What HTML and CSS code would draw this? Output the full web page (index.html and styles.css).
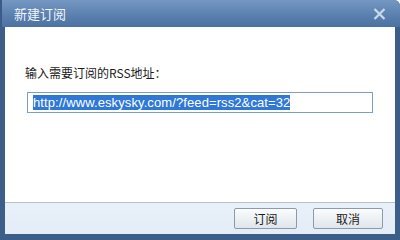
FILE: index.html
```html
<!DOCTYPE html>
<html lang="zh-CN">
<head>
  <meta charset="UTF-8" />
  <title>新建订阅</title>
  <link rel="stylesheet" href="styles.css">
</head>
<body>
  <div class="window">
    <div class="titlebar">
      <span class="title">新建订阅</span>
      <button class="close" title="关闭">
        <svg width="13" height="12" viewBox="0 0 13 12">
          <path d="M1.5 1 L11.5 11 M11.5 1 L1.5 11" stroke="#c9d9ec" stroke-width="2.2" fill="none" />
        </svg>
      </button>
    </div>

    <div class="content">
      <label class="field-label" for="rssUrl">输入需要订阅的RSS地址：</label>
      <div class="url-box">
        <span class="selected" id="rssUrl">http://www.eskysky.com/?feed=rss2&amp;cat=32</span>
      </div>
    </div>

    <div class="footer">
      <button class="btn btn-ok">订阅</button>
      <button class="btn btn-cancel">取消</button>
    </div>
  </div>
</body>
</html>
```

FILE: styles.css
```css
body {
  margin: 0;
  background: #ffffff;
  font-family: "Liberation Sans", "Noto Sans CJK SC", sans-serif;
}
.window {
  width: 400px;
  height: 240px;
  box-sizing: border-box;
  display: flex;
  flex-direction: column;
  background: #3c5e88;
  border-radius: 0 6px 0 0;
  padding-bottom: 6px;
  overflow: hidden;
}
.titlebar {
  height: 27px;
  flex: none;
  display: flex;
  align-items: center;
  justify-content: space-between;
  padding: 0 14px 0 14px;
  background: linear-gradient(#7598c2, #5a7fae 60%, #4c72a2);
  border-left: 2px solid #3a5c86;
  box-sizing: border-box;
}
.title {
  color: #f2f6fb;
  font-size: 13px;
  font-family: "Noto Sans CJK SC", sans-serif;
  margin-left: -2px;
}
.close {
  border: none;
  background: none;
  padding: 0;
  width: 13px;
  height: 12px;
  display: flex;
}
.content {
  flex: 1;
  margin: 0 5px;
  background: #ffffff;
  padding: 38px 0 0 20px;
  border-bottom: 1px solid #b9c2cc;
}
.field-label {
  display: block;
  font-size: 12px;
  color: #1b1b1b;
  font-family: "Noto Sans CJK SC", sans-serif;
  line-height: 16px;
}
.url-box {
  margin: 11px 0 0 2px;
  width: 346px;
  height: 21px;
  box-sizing: border-box;
  border: 1px solid #7f9dc4;
  padding: 2px 5px;
  display: flex;
  align-items: center;
}
.selected {
  background: #2f78d6;
  color: #ffffff;
  font-size: 13px;
  letter-spacing: 0.1px;
  line-height: 15px;
  white-space: nowrap;
}
.footer {
  height: 31px;
  flex: none;
  margin: 0 5px;
  background: linear-gradient(#e9f0f9, #e3ecf7);
  display: flex;
  justify-content: flex-end;
  align-items: flex-start;
  gap: 16px;
  padding: 5px 12px 0 0;
  box-sizing: border-box;
}
.btn {
  height: 21px;
  border: 1px solid #8e9aa8;
  border-radius: 2px;
  background: linear-gradient(#fbfcfd, #edf1f5 50%, #dfe5ec);
  font-size: 12px;
  font-family: "Noto Sans CJK SC", sans-serif;
  color: #1b1b1b;
  padding: 0;
}
.btn-ok {
  width: 63px;
}
.btn-cancel {
  width: 70px;
}
```
